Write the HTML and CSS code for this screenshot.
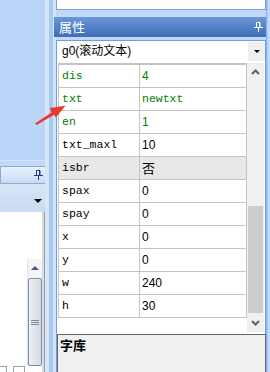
FILE: index.html
```html
<!DOCTYPE html>
<html>
<head>
<meta charset="utf-8">
<link rel="stylesheet" href="styles.css">
</head>
<body>
<div class="app">
  <div class="left">
    <div class="l-top"></div>
    <div class="l-title">
      <svg class="pin" width="9" height="10" viewBox="0 0 9 10"><path d="M2.5 0.5h3.5v5h-3.5z M5.5 0.5v5" stroke="#1b3f7e" fill="none"/><path d="M0 5h9v1H0z M4 6h1v4H4z" fill="#1b3f7e"/></svg>
    </div>
    <div class="l-tool"><span class="l-tri"></span></div>
    <div class="l-list">
      <div class="l-main">
        <div class="l-head"></div>
        <div class="l-body">
          <div class="l-white"></div>
          <div class="l-scroll">
            <div class="l-up"><span class="l-up-tri"></span></div>
            <div class="l-thumb"><span class="grip"></span><span class="grip"></span><span class="grip"></span></div>
          </div>
        </div>
        <div class="l-foot"><span class="fbox fbox1"></span><span class="fbox fbox2"></span></div>
      </div>
      <div class="l-strip"></div>
    </div>
  </div>
  <div class="split"></div>
  <div class="right">
    <div class="top-box"></div>
    <div class="title">
      <span class="title-text">属性</span>
      <svg class="pin" width="9" height="10" viewBox="0 0 9 10"><path d="M2.5 0.5h3.5v5h-3.5z M5.5 0.5v5" stroke="#fff" fill="none"/><path d="M0 5h9v1H0z M4 6h1v4H4z" fill="#fff"/></svg>
    </div>
    <div class="panel">
      <div class="combo">
        <span class="combo-text">g0(滚动文本)</span>
        <div class="combo-btn"><span class="tri"></span></div>
      </div>
      <div class="grid-wrap">
        <div class="grid">
          <div class="row"><div class="name green">dis</div><div class="val green num">4</div></div>
          <div class="row"><div class="name green">txt</div><div class="val green">newtxt</div></div>
          <div class="row"><div class="name green">en</div><div class="val green num">1</div></div>
          <div class="row"><div class="name">txt_maxl</div><div class="val num">10</div></div>
          <div class="row sel"><div class="name">isbr</div><div class="val cjk">否</div></div>
          <div class="row"><div class="name">spax</div><div class="val num">0</div></div>
          <div class="row"><div class="name">spay</div><div class="val num">0</div></div>
          <div class="row"><div class="name">x</div><div class="val num">0</div></div>
          <div class="row"><div class="name">y</div><div class="val num">0</div></div>
          <div class="row"><div class="name">w</div><div class="val num">240</div></div>
          <div class="row"><div class="name">h</div><div class="val num">30</div></div>
        </div>
        <div class="vscroll">
          <svg class="chev" width="9" height="6" viewBox="0 0 9 6"><path d="M1 5L4.5 1.5L8 5" stroke="#606060" stroke-width="2" fill="none"/></svg>
          <div class="thumb"></div>
          <svg class="chev" width="9" height="6" viewBox="0 0 9 6"><path d="M1 1L4.5 4.5L8 1" stroke="#606060" stroke-width="2" fill="none"/></svg>
        </div>
      </div>
      <div class="lib">字库</div>
    </div>
  </div>
  <div class="edge"></div>
  <svg class="arrow" width="270" height="372" viewBox="0 0 270 372">
    <path d="M35 123.5 L51.5 112.4 L50 108 L65.5 105.8 L55.8 117.5 L54 114.8 L36.8 125 Z" fill="#ea3a2e"/>
  </svg>
</div>
</body>
</html>
```
FILE: styles.css
```css
* { box-sizing: border-box; }
html, body { margin: 0; padding: 0; }
body {
  width: 270px;
  height: 372px;
  overflow: hidden;
  background: #c0d9f8;
  font-family: "Liberation Sans", "Noto Sans CJK SC", sans-serif;
}
.app {
  position: relative;
  display: flex;
  width: 270px;
  height: 372px;
}
/* left column */
.left {
  width: 45px;
  display: flex;
  flex-direction: column;
}
.l-top {
  width: 48px;
  height: 161px;
  background: #bad5f7;
  border-right: 1px solid #9fc0ea;
  border-bottom: 1px solid #d3e5fb;
  margin-bottom: 5px;
}
.l-title {
  width: 49px;
  height: 18px;
  background: linear-gradient(#eaf2fd, #c8dbf4);
  border: 1px solid #88acdc;
  border-radius: 0 2px 2px 0;
  display: flex;
  align-items: center;
  justify-content: flex-end;
  padding-right: 5px;
}
.l-tool {
  width: 45px;
  height: 28px;
  background: linear-gradient(#d7e5f6, #c9dbf1);
  display: flex;
  align-items: center;
  justify-content: flex-end;
  padding-right: 3px;
  padding-top: 6px;
}
.l-tri {
  width: 0;
  height: 0;
  border-left: 4px solid transparent;
  border-right: 4px solid transparent;
  border-top: 4px solid #000;
}
.l-list {
  flex: 1;
  display: flex;
  background: #fff;
}
.l-main {
  flex: 1;
  display: flex;
  flex-direction: column;
}
.l-head { height: 47px; }
.l-body {
  flex: 1;
  display: flex;
}
.l-white { flex: 1; }
.l-scroll {
  width: 15px;
  display: flex;
  flex-direction: column;
  background: #f4f5f7;
  border-left: 1px solid #dfe3e9;
}
.l-up {
  height: 19px;
  display: flex;
  justify-content: center;
  padding-top: 7px;
}
.l-up-tri {
  width: 0;
  height: 0;
  border-left: 4px solid transparent;
  border-right: 4px solid transparent;
  border-bottom: 4px solid #4a5d80;
}
.l-thumb {
  flex: 1;
  border: 1px solid #7f8ea6;
  border-radius: 2px;
  background: linear-gradient(to right, #eef1f5, #d3dae4);
  display: flex;
  flex-direction: column;
  align-items: center;
  justify-content: center;
  gap: 1px;
}
.grip {
  width: 8px;
  height: 1px;
  background: #76869d;
}
.l-foot {
  height: 6px;
  display: flex;
  gap: 6px;
}
.fbox {
  height: 6px;
  border: 1px solid #8fa2bf;
  border-bottom: none;
}
.fbox1 { width: 7px; border-left: none; }
.fbox2 { width: 12px; }
.l-strip {
  width: 3px;
  background: linear-gradient(to right, #dcdcdc 0 2px, #9c9c9c 2px);
}
/* splitter */
.split {
  width: 11px;
  background: linear-gradient(to right, #d6e7fc 0 4px, #a8c8f0 4px 8px, #d0e3fa 8px 11px);
}
/* right column */
.right {
  width: 210px;
  display: flex;
  flex-direction: column;
}
.top-box {
  height: 10px;
  background: #fff;
  border: 1px solid #74a3df;
  border-top: none;
  margin-bottom: 7px;
}
.title {
  height: 20px;
  margin: 0 -2px 3px -2px;
  background: linear-gradient(#6a97d8, #3f6db6);
  display: flex;
  align-items: center;
  justify-content: space-between;
  padding: 0 5px 0 5px;
}
.title-text {
  color: #fff;
  font-family: "Noto Sans CJK SC", sans-serif;
  font-size: 13px;
  line-height: 20px;
}
.panel {
  flex: 1;
  background: #fff;
  border: 1px solid #6f9fdf;
  border-bottom: none;
  display: flex;
  flex-direction: column;
}
.combo {
  height: 22px;
  display: flex;
  align-items: flex-start;
  justify-content: space-between;
}
.combo-text {
  padding-left: 5px;
  line-height: 21px;
  font-family: "Liberation Sans", "Noto Sans CJK SC", sans-serif;
  font-size: 12px;
  color: #000;
}
.combo-btn {
  width: 17px;
  height: 19px;
  margin-top: 1px;
  background: #f0f0f0;
  display: flex;
  align-items: center;
  justify-content: center;
}
.tri {
  width: 0;
  height: 0;
  border-left: 3px solid transparent;
  border-right: 3px solid transparent;
  border-top: 3px solid #000;
}
.grid-wrap {
  height: 269px;
  display: flex;
  align-items: flex-start;
}
.grid {
  width: 189px;
  margin-left: 1px;
  border-top: 2px solid #c4c4c4;
  border-left: 1px solid #c4c4c4;
  border-right: 1px solid #c4c4c4;
}
.row {
  display: flex;
  height: 23px;
  border-bottom: 1px solid #c4c4c4;
}
.row.sel { background: #e8e8e8; }
.name {
  width: 81px;
  border-right: 1px solid #c4c4c4;
  padding-left: 3px;
  font-family: "Liberation Mono", monospace;
  font-size: 11.5px;
  line-height: 22px;
  color: #000;
}
.val {
  flex: 1;
  padding-left: 2px;
  font-family: "Liberation Mono", monospace;
  font-size: 11.5px;
  line-height: 22px;
  color: #000;
}
.val.num {
  font-family: "Liberation Sans", sans-serif;
  font-size: 12px;
}
.val.cjk {
  font-family: "Noto Sans CJK SC", sans-serif;
  font-size: 13px;
}
.green { color: #008000 !important; }
.vscroll {
  width: 17px;
  height: 269px;
  background: #f0f0f0;
  display: flex;
  flex-direction: column;
  align-items: center;
  padding-top: 6px;
}
.chev { display: block; }
.thumb {
  width: 15px;
  height: 107px;
  margin-top: 131px;
  margin-bottom: 7px;
  background: #cdcdcd;
}
.lib {
  margin: 2px -1px 0 0;
  flex: 1;
  background: #f0f0f0;
  border: 1px solid #666;
  border-bottom: none;
  padding: 1px 0 0 2px;
  font-family: "Noto Sans CJK SC", sans-serif;
  font-weight: bold;
  font-size: 13px;
  line-height: 17px;
  color: #000;
}
.edge {
  width: 4px;
  background: linear-gradient(to right, #84b5f1 0 1px, #a9cbf6 1px 2px, #c3dbf9 2px);
}
.arrow {
  position: absolute;
  left: 0;
  top: 0;
  pointer-events: none;
}
```
